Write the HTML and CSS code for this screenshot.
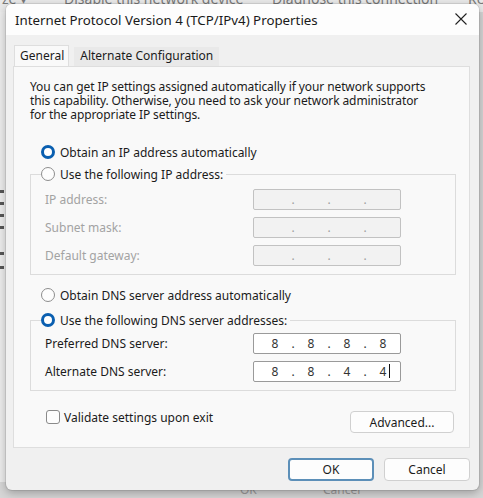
FILE: index.html
```html
<!DOCTYPE html>
<html>
<head>
<meta charset="utf-8">
<link rel="stylesheet" href="styles.css">
</head>
<body>
<div class="desktop">
  <div class="bg-top">
    <span class="cmd0">ze ▾</span>
    <span class="cmd1">Disable this network device</span>
    <span class="cmd2">Diagnose this connection</span>
    <span class="cmd3">Re</span>
  </div>
  <div class="bg-left">
    <span class="mark m1"></span><span class="mark m2"></span><span class="mark m3"></span><span class="mark m4"></span><span class="mark m5"></span><span class="mark m6"></span>
  </div>
  <div class="bg-bottom"><span class="ghost g1">OK</span><span class="ghost g2">Cancel</span></div>
  <div class="dialog">
    <div class="titlebar">
      <span class="title">Internet Protocol Version 4 (TCP/IPv4) Properties</span>
      <svg class="close" width="12" height="12" viewBox="0 0 12 12"><path d="M0.5 0.5 L11.5 11.5 M11.5 0.5 L0.5 11.5" stroke="#222" stroke-width="1.1" fill="none"/></svg>
    </div>
    <div class="body">
      <div class="tabs">
        <div class="tab active">General</div>
        <div class="tab">Alternate Configuration</div>
      </div>
      <div class="panel">
        <p class="intro">You can get IP settings assigned automatically if your network supports<br>this capability. Otherwise, you need to ask your network administrator<br>for the appropriate IP settings.</p>
        <div class="radio-row first"><span class="radio on"></span><span>Obtain an IP address automatically</span></div>
        <fieldset class="group off">
          <legend class="radio-row"><span class="radio"></span><span class="legend-text">Use the following IP address:</span></legend>
          <div class="field-row"><span class="lbl">IP address:</span><div class="ipbox"><span></span><i>.</i><span></span><i>.</i><span></span><i>.</i><span></span></div></div>
          <div class="field-row"><span class="lbl">Subnet mask:</span><div class="ipbox"><span></span><i>.</i><span></span><i>.</i><span></span><i>.</i><span></span></div></div>
          <div class="field-row"><span class="lbl">Default gateway:</span><div class="ipbox"><span></span><i>.</i><span></span><i>.</i><span></span><i>.</i><span></span></div></div>
        </fieldset>
        <div class="radio-row dns-auto"><span class="radio"></span><span>Obtain DNS server address automatically</span></div>
        <fieldset class="group on dns">
          <legend class="radio-row"><span class="radio on"></span><span>Use the following DNS server addresses:</span></legend>
          <div class="field-row"><span class="lbl">Preferred DNS server:</span><div class="ipbox"><span>8</span><i>.</i><span>8</span><i>.</i><span>8</span><i>.</i><span>8</span></div></div>
          <div class="field-row"><span class="lbl">Alternate DNS server:</span><div class="ipbox"><span>8</span><i>.</i><span>8</span><i>.</i><span>4</span><i>.</i><span class="caret">4</span></div></div>
        </fieldset>
        <div class="bottom-row">
          <label class="check"><span class="box"></span><span>Validate settings upon exit</span></label>
          <button class="btn adv">Advanced...</button>
        </div>
      </div>
      <div class="buttons">
        <button class="btn ok">OK</button>
        <button class="btn">Cancel</button>
      </div>
    </div>
  </div>
</div>
</body>
</html>
```
FILE: styles.css
```css
* { box-sizing: border-box; }
html, body { margin: 0; padding: 0; }
body {
  font-family: "Noto Sans", "Open Sans", sans-serif;
  font-size: 12px;
  color: #1b1b1b;
}
.desktop {
  position: relative;
  width: 483px;
  height: 498px;
  overflow: hidden;
  background: #d6d6d6;
}
.bg-top {
  height: 12px;
  background: #e9e9e9;
  color: #7a7a7a;
  font-size: 14px;
  line-height: 12px;
  white-space: nowrap;
  overflow: hidden;
  position: relative;
}
.bg-top span { position: absolute; top: -7px; }
.cmd0 { left: 2px; }
.cmd1 { left: 64px; }
.cmd2 { left: 272px; }
.cmd3 { left: 468px; }
.bg-left {
  width: 7px;
  height: 470px;
  background: #ececec;
  border-right: 1px solid #d0d0d0;
  position: relative;
}
.mark { position: absolute; left: 0; width: 4px; height: 3px; background: #555; }
.m1 { top: 178px; } .m2 { top: 190px; } .m3 { top: 202px; } .m4 { top: 214px; } .m5 { top: 240px; } .m6 { top: 254px; }
.bg-bottom { position: relative; height: 16px; }
.ghost { position: absolute; top: 0; color: #9a9a9a; font-size: 12px; line-height: 16px; }
.g1 { left: 240px; } .g2 { left: 323px; }

.dialog {
  position: absolute;
  z-index: 1;
  left: 6px;
  top: 4px;
  width: 473px;
  height: 486px;
  background: #f0f0f0;
  border-radius: 6px;
  box-shadow: 0 3px 10px rgba(0,0,0,0.28), 0 0 0 1px rgba(0,0,0,0.08);
  overflow: hidden;
}
.titlebar {
  height: 31px;
  background: #fdfdfd;
  display: flex;
  align-items: center;
  padding: 0 12px 0 9px;
}
.title { font-size: 13.3px; color: #1a1a1a; flex: 1; }
.close { margin-top: -2px; }
.body { padding: 10px 9px 0 7px; }
.tabs { display: flex; height: 21px; align-items: flex-end; padding-left: 1px; }
.tab {
  height: 19px;
  padding: 0 6px;
  line-height: 18px;
  background: #e9e9e9;
  color: #1b1b1b;
}
.tab.active {
  height: 21px;
  line-height: 20px;
  background: #f9f9f9;
  border: 1px solid #dedede;
  border-bottom: none;
  margin-right: 5px;
  padding: 0 4px 0 5px;
}
.panel {
  background: #f9f9f9;
  border: 1px solid #dedede;
  height: 382px;
  padding: 13px 13px 0 16px;
}
.intro { margin: 0; line-height: 14px; white-space: nowrap; letter-spacing: -0.1px; }
.radio-row { display: flex; align-items: center; height: 16px; }
.radio-row.first { margin: 22px 0 6px 11px; }
.radio {
  width: 14px;
  height: 14px;
  border-radius: 50%;
  border: 1px solid #8d8d8d;
  background: #fdfdfd;
  margin-right: 5px;
  flex: none;
}
.radio.on { border: 3px solid #0a5fb0; background: #fff; }
.group {
  margin: 0;
  padding: 0 0 8px 14px;
  border: 1px solid #dcdcdc;
  width: 426px;
}
.group legend { padding: 0 3px 0 0; margin-left: -4px; }
.field-row { display: flex; align-items: center; height: 21px; margin-top: 7px; }
.group.off .field-row:first-of-type { margin-top: 7px; }
.lbl { width: 208px; }
.group.off .lbl { color: #a3a3a3; }
.ipbox {
  width: 148px;
  height: 21px;
  border: 1px solid #c2c2c2;
  border-radius: 2px;
  background: #f2f2f2;
  display: flex;
  align-items: center;
  padding-left: 8px;
  color: #a0a0a0;
}
.ipbox span { width: 26px; text-align: center; }
.ipbox i { font-style: normal; width: 10px; text-align: center; }
.group.on .ipbox { background: #fff; border-color: #9a9a9a; color: #333; }
.caret { position: relative; }
.caret::after {
  content: "";
  position: absolute;
  right: 6px;
  top: 1px;
  width: 1px;
  height: 14px;
  background: #111;
}
.dns-auto { margin: 12px 0 9px 11px; }
.group.dns { padding-bottom: 8px; }
.group.dns .field-row:first-of-type { margin-top: 5px; }
.bottom-row {
  display: flex;
  justify-content: space-between;
  align-items: flex-start;
  margin-top: 19px;
  padding-left: 16px;
  width: 424px;
}
.check { display: flex; align-items: center; height: 14px; margin-top: 0; }
.box {
  width: 14px;
  height: 14px;
  border: 1px solid #8a8a8a;
  border-radius: 3px;
  background: #fdfdfd;
  margin-right: 4px;
}
.btn {
  font-family: inherit;
  font-size: 12px;
  color: #1b1b1b;
  background: #fdfdfd;
  border: 1px solid #d0d0d0;
  border-radius: 4px;
  height: 22px;
  padding: 0;
}
.adv { width: 104px; margin-top: 1px; }
.buttons {
  display: flex;
  justify-content: flex-end;
  gap: 10px;
  margin-top: 10px;
}
.buttons .btn { width: 86px; height: 23px; }
.btn.ok { border: 2px solid #5c8fb8; }
```
